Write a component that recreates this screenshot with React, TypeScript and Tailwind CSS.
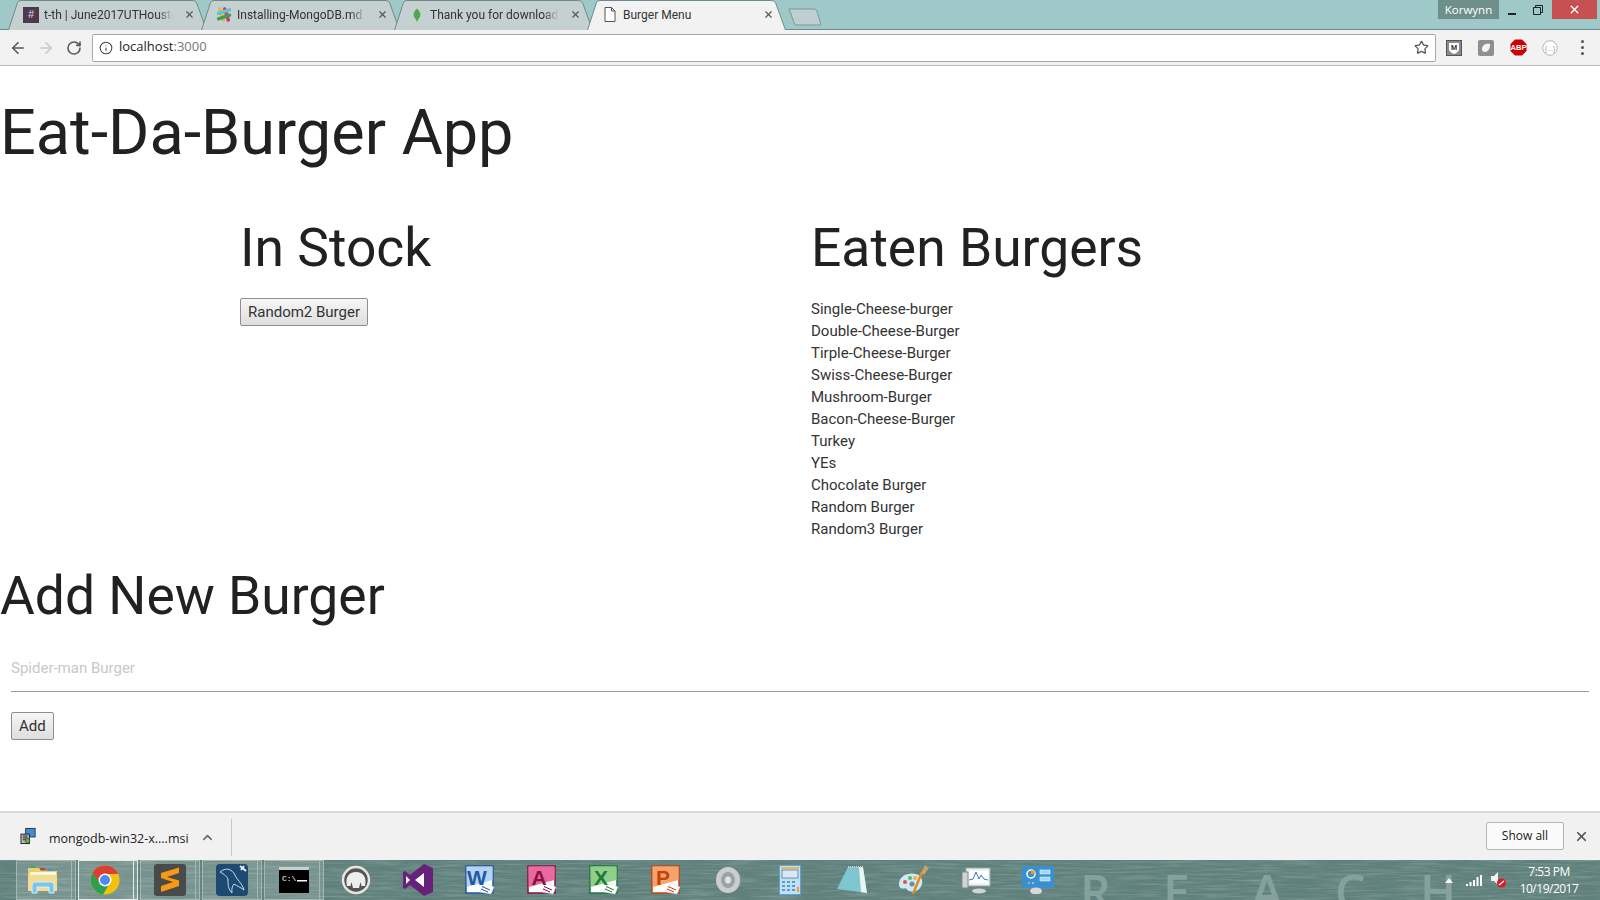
import React from "react";
import { ArrowLeft, ArrowRight, RotateCw, Info, Star, X, ChevronUp } from "lucide-react";

function TabShape({ active }: { active?: boolean }) {
  return (
    <svg className="absolute inset-0" width="199" height="30" viewBox="0 0 199 30">
      <path d="M0.5 30 L9.5 2.5 Q10.5 0.5 13 0.5 L184 0.5 Q187 0.5 188.5 2.5 L198.5 30" fill={active ? "#f2f2f2" : "#c5d0d0"} stroke="#6f8a8a" strokeWidth="1" />
    </svg>
  );
}

function Tab({ icon, label, active, fade }: { icon: React.ReactNode; label: string; active?: boolean; fade?: boolean }) {
  return (
    <div className={`relative h-[30px] w-[199px] -mr-[6px] shrink-0 ${active ? "z-10" : ""}`}>
      <TabShape active={active} />
      <div className="relative flex h-full items-center pb-[1px] pl-[15px]">
        <div className="flex h-4 w-4 shrink-0 items-center justify-center">{icon}</div>
        <div className={`ml-[5px] w-[129px] overflow-hidden whitespace-nowrap font-['Roboto',sans-serif] text-[12px] text-[#333] ${fade ? "[mask-image:linear-gradient(to_right,black_88%,transparent)]" : ""}`}>{label}</div>
        <X size={11} strokeWidth={2.4} className="ml-[11px] shrink-0 text-[#555]" />
      </div>
    </div>
  );
}

const SlackIcon = () => (
  <svg width="17" height="17" viewBox="0 0 16 16">
    <rect x="3.800" y="0.5" width="3.400" height="15" rx="1.700" fill="#e8b93a" transform="rotate(-18 5.5 8)" />
    <rect x="8.800" y="0.5" width="3.400" height="15" rx="1.700" fill="#dc2f6a" transform="rotate(-18 10.5 8)" />
    <rect x="0.5" y="3.400" width="15" height="3.400" rx="1.700" fill="#5cc7cf" transform="rotate(-18 8 5)" />
    <rect x="0.5" y="8.800" width="15" height="3.400" rx="1.700" fill="#3f9d5a" transform="rotate(-18 8 10.5)" />
  </svg>
);

const LeafIcon = () => (
  <svg width="8" height="16" viewBox="0 0 10 16">
    <path d="M5 0 C8 3 10 6 9 9.5 C8.300 12 6 13.500 5.300 16 L4.700 16 C4 13.500 1.700 12 1 9.500 C0 6 2 3 5 0Z" fill="#4fa84a" />
  </svg>
);

const FileIcon = () => (
  <svg width="12" height="15" viewBox="0 0 12 15" fill="#fff" stroke="#555" strokeWidth="1">
    <path d="M1 .5 H7.500 L11 4 V14.500 H1Z M7.500 .5 V4 H11" />
  </svg>
);

const Ext = ({ children }: { children: React.ReactNode }) => (
  <div className="flex h-[24px] w-[32px] items-center justify-center">{children}</div>
);

function TaskBtn({ children, active, framed, nudge }: { children: React.ReactNode; active?: boolean; framed?: boolean; nudge?: boolean }) {
  return (
    <div className="relative flex h-[40px] w-[62px] shrink-0 items-center justify-center">
      {framed && (
        <div className={`absolute inset-y-0 left-[1px] right-[1px] border bg-white/15 ${active ? "border-[#e6eeec]" : "border-[#a3b8b4]"}`}>
          <div className={`absolute inset-y-0 right-[3px] w-px ${active ? "bg-[#e6eeec]" : "bg-[#a3b8b4]"}`} />
        </div>
      )}
      <div className={`relative flex items-center justify-center ${nudge ? "pr-[6px]" : ""}`}>{children}</div>
    </div>
  );
}

const Ms = ({ letter, color, light }: { letter: string; color: string; light: string }) => (
  <svg width="30" height="30" viewBox="0 0 30 30">
    <rect x="1" y="1" width="27" height="27" fill="#fff" stroke={color} strokeWidth="1.500" />
    <path d="M1.500 1.500 H27.500 V15 L2 22Z" fill={light} />
    <path d="M20 18 L29 22 L26 29 L15 27Z" fill="#fff" stroke="#ccc" strokeWidth=".5" />
    <path d="M17 21.500 L25 25 M16 24 L23 27" stroke={color} strokeWidth="1" />
    <text x="12" y="20" fontSize="21" fontWeight="700" textAnchor="middle" fill={color} fontFamily="Liberation Sans">{letter}</text>
  </svg>
);

const Letter = ({ c, left }: { c: string; left: string }) => (
  <div className={`absolute top-[8px] font-['Open_Sans',sans-serif] text-[48px] font-semibold leading-none text-[#84a19e] ${left}`}>{c}</div>
);

export default function App() {
  const eaten = ["Single-Cheese-burger", "Double-Cheese-Burger", "Tirple-Cheese-Burger", "Swiss-Cheese-Burger", "Mushroom-Burger", "Bacon-Cheese-Burger", "Turkey", "YEs", "Chocolate Burger", "Random Burger", "Random3 Burger"];
  return (
    <div className="flex h-[900px] w-[1600px] flex-col overflow-hidden bg-white font-['Roboto',sans-serif] text-[#212121]">
      {/* Tab strip */}
      <div className="relative flex h-[30px] shrink-0 items-start border-b border-[#6f8a8a] bg-[#9fc8c8] pl-[8px] font-['Open_Sans',sans-serif]">
        <Tab fade label="t-th | June2017UTHouston" icon={<div className="flex h-4 w-4 items-center justify-center bg-[#4d394b] text-[11px] text-[#cfc3ce]">#</div>} />
        <Tab fade label="Installing-MongoDB.md | GitHub" icon={<SlackIcon />} />
        <Tab fade label="Thank you for downloading" icon={<LeafIcon />} />
        <Tab active label="Burger Menu" icon={<FileIcon />} />
        <svg width="34" height="18" viewBox="0 0 34 18" className="ml-[8px] mt-[8px] shrink-0">
          <path d="M1 1 H26 Q28 1 29 3 L33 17 H7 L1 1Z" fill="#bfcfcf" stroke="#7d9696" />
        </svg>
        <div className="ml-auto flex items-start">
          <div className="flex h-[19px] w-[61px] items-center justify-center bg-[#6e8f8c] text-[11.500px] text-white">Korwynn</div>
          <div className="flex h-[19px] w-[26px] items-end justify-center pb-[4px]"><div className="h-[2px] w-[8px] bg-[#222]" /></div>
          <div className="flex h-[19px] w-[26px] items-center justify-center">
            <svg width="10" height="10" viewBox="0 0 10 10" fill="none" stroke="#222"><path d="M.5 2.500 H7.500 V9.500 H.5Z M2.500 2.500 V.5 H9.500 V7.500 H7.500" /></svg>
          </div>
          <div className="ml-[1px] mr-[3px] flex h-[19px] w-[45px] items-center justify-center bg-[#c75050]"><X size={13} strokeWidth={2.5} className="text-white" /></div>
        </div>
      </div>
      {/* Toolbar */}
      <div className="flex h-[36px] shrink-0 items-center border-b border-[#b8b8b8] bg-[#f2f2f2]">
        <div className="flex w-[92px] items-center pl-[9px]">
          <ArrowLeft size={18} strokeWidth={2.200} className="text-[#5a5a5a]" />
          <ArrowRight size={18} strokeWidth={2} className="ml-[10px] text-[#c8c8c8]" />
          <RotateCw size={16} strokeWidth={2.400} className="ml-[11px] text-[#5a5a5a]" />
        </div>
        <div className="flex h-[28px] w-[1344px] items-center rounded-[2px] border border-[#a9a9a9] bg-white pl-[6px] pr-[4px]">
          <Info size={14} strokeWidth={1.800} className="text-[#444]" />
          <div className="ml-[6px] pb-[1px] font-['Open_Sans',sans-serif] text-[13px] text-[#222]">localhost<span className="text-[#777]">:3000</span></div>
          <Star size={15} strokeWidth={2} className="ml-auto mr-[2px] text-[#555]" />
        </div>
        <div className="ml-[2px] flex flex-1 items-center">
          <Ext>
            <svg width="16" height="16" viewBox="0 0 16 16"><rect x=".5" y=".5" width="15" height="15" fill="#8a8a8a" stroke="#555" /><path d="M3 3 H13 V9 Q13 12 8 14 Q3 12 3 9Z" fill="#fff" /><text x="8" y="10" fontSize="7" fontWeight="700" textAnchor="middle" fill="#333">M</text></svg>
          </Ext>
          <Ext>
            <svg width="16" height="16" viewBox="0 0 16 16"><rect width="16" height="16" rx="2" fill="#8f8f8f" /><path d="M4 9 C4 5 8 3 12 4 C12.500 8 10 12 7 12 C5 12 4 11 4 9Z" fill="#f4f4f4" /></svg>
          </Ext>
          <Ext>
            <svg width="17" height="17" viewBox="0 0 17 17"><path d="M5 0.500 H12 L16.500 5 V12 L12 16.500 H5 L0.500 12 V5Z" fill="#c00" /><text x="8.500" y="11.300" fontSize="7.500" fontWeight="700" textAnchor="middle" fill="#fff" fontFamily="Liberation Sans">ABP</text></svg>
          </Ext>
          <Ext>
            <svg width="16" height="16" viewBox="0 0 16 16"><circle cx="8" cy="8" r="7.300" fill="#fff" stroke="#b5b5b5" /><text x="8" y="10.500" fontSize="7" textAnchor="middle" fill="#999" fontFamily="Liberation Sans">{"{...}"}</text></svg>
          </Ext>
          <div className="ml-[4px] flex w-[24px] flex-col items-center gap-[3px]">
            <div className="h-[3px] w-[3px] rounded-full bg-[#555]" />
            <div className="h-[3px] w-[3px] rounded-full bg-[#555]" />
            <div className="h-[3px] w-[3px] rounded-full bg-[#555]" />
          </div>
        </div>
      </div>
      {/* Page */}
      <main className="min-h-0 flex-1 overflow-hidden">
        <h1 className="mt-[32px] text-[63px] font-normal leading-[69px]">Eat-Da-Burger App</h1>
        <div className="mt-[51px] flex pl-[240px]">
          <section className="w-[571px]">
            <h2 className="text-[53.400px] font-normal leading-[59px]">In Stock</h2>
            <button className="mt-[21px] block h-[28px] rounded-[2px] border border-[#8f8f8f] bg-gradient-to-b from-[#f6f6f6] to-[#dedede] px-[7px] text-[15px] leading-none text-[#333]">Random2 Burger</button>
          </section>
          <section>
            <h2 className="text-[53.400px] font-normal leading-[59px]">Eaten Burgers</h2>
            <ul className="mt-[21px]">
              {eaten.map((b) => <li key={b} className="text-[15px] leading-[22px] text-[#333]">{b}</li>)}
            </ul>
          </section>
        </div>
        <h2 className="mt-[26px] text-[53.400px] font-normal leading-[59px]">Add New Burger</h2>
        <div className="mx-[11px] mt-[20px] flex h-[47px] items-center border-b border-[#9e9e9e] text-[15px] text-[#c8c8c8]">Spider-man Burger</div>
        <button className="ml-[11px] mt-[20px] block h-[28px] rounded-[2px] border border-[#8f8f8f] bg-gradient-to-b from-[#f6f6f6] to-[#dedede] px-[7px] text-[15px] leading-none text-[#333]">Add</button>
      </main>
      {/* Downloads */}
      <div className="flex h-[49px] shrink-0 items-center border-t-2 border-[#d9d9d9] bg-[#f1f1f1] pb-[1px] font-['Open_Sans',sans-serif]">
        <svg width="17" height="18" viewBox="0 0 18 18" className="ml-[20px]">
          <rect x="6" y="1" width="10" height="9" fill="#3a8fd8" stroke="#333" />
          <rect x="1" y="7" width="9" height="10" fill="#b9b9b9" stroke="#222" />
          <path d="M3 9 H8 M3 11 H8 M3 13 H8" stroke="#222" />
          <circle cx="8" cy="14" r="2.500" fill="#5ab04a" stroke="#222" strokeWidth=".5" />
        </svg>
        <div className="ml-[12px] w-[144px] whitespace-nowrap pt-[6px] text-[12.500px] text-[#222]">mongodb-win32-x....msi</div>
        <ChevronUp size={15} strokeWidth={2.400} className="ml-[7px] mt-[3px] text-[#666]" />
        <div className="ml-[16px] mt-[3px] h-[37px] w-px bg-[#c8c8c8]" />
        <div className="ml-auto flex h-[28px] w-[78px] items-center justify-center rounded-[2px] border border-[#b5b5b5] bg-[#fafafa] text-[12px] text-[#222]">Show all</div>
        <X size={15} strokeWidth={2.800} className="ml-[10px] mr-[11px] text-[#555]" />
      </div>
      {/* Taskbar */}
      <div className="relative flex h-[40px] shrink-0 items-center overflow-hidden bg-[#5f807b] pl-[15px]">
        <svg className="absolute inset-0" width="1600" height="40">
          <filter id="water"><feTurbulence type="fractalNoise" baseFrequency="0.025 0.5" numOctaves="3" seed="4" /><feColorMatrix values="0 0 0 0 0.68  0 0 0 0 0.76  0 0 0 0 0.74  1.400 0 0 0 -0.550" /></filter>
          <rect width="1600" height="40" filter="url(#water)" opacity="0.35" />
        </svg>
        <Letter c="R" left="left-[1080px]" />
        <Letter c="E" left="left-[1163px]" />
        <Letter c="A" left="left-[1251px]" />
        <Letter c="C" left="left-[1335px]" />
        <Letter c="H" left="left-[1420px]" />
        <TaskBtn framed nudge>
          <svg width="32" height="30" viewBox="0 0 32 30"><path d="M1 3 H12 L14 6 H30 V26 H1Z" fill="#e8cf78" /><rect x="3" y="7" width="26" height="3" fill="#fff7d6" /><rect x="4" y="1" width="4" height="2" fill="#49a948" /><rect x="13" y="3" width="5" height="2" fill="#c8412f" /><rect x="21" y="4" width="5" height="2" fill="#3d94d8" /><path d="M1 10 H30 V26 H1Z" fill="#f3dd92" /><path d="M5 28 V20 Q5 17 8 17 H24 Q27 17 27 20 V28 H22 V22 H10 V28Z" fill="#7cc4ea" stroke="#d5efff" /></svg>
        </TaskBtn>
        <TaskBtn framed active nudge>
          <svg width="30" height="30" viewBox="0 0 30 30"><circle cx="15" cy="15" r="14.500" fill="#f4c20d" /><path d="M15 .5 A14.500 14.500 0 0 0 2.500 7.700 L9 18.500 L15 9 H28.300 A14.500 14.500 0 0 0 15 .5Z" fill="#db3e32" /><path d="M2.500 7.700 A14.500 14.500 0 0 0 13 29.400 L19 19.500 L10.500 19 Z" fill="#2f9e4f" /><circle cx="15" cy="15" r="6.500" fill="#fff" /><circle cx="15" cy="15" r="5" fill="#4c8bf5" /></svg>
        </TaskBtn>
        <TaskBtn framed>
          <svg width="32" height="32" viewBox="0 0 32 32"><rect width="32" height="32" rx="3" fill="#4a4a4a" /><path d="M7 12 L25 6.500 V12 L13 16 L25 19.500 V25 L7 31 V25 L19 21 L7 17Z" transform="translate(0 -3)" fill="#f59a12" /></svg>
        </TaskBtn>
        <TaskBtn framed>
          <svg width="32" height="32" viewBox="0 0 32 32"><rect width="32" height="32" rx="4" fill="#1c4a72" /><path d="M4 8 C10 3 16 5 19 11 C21 16 26 19 28 26 C24 23 21 22 18 20 C15 24 16 27 16 29 C12 25 12 20 12 16 C12 13 8 10 4 8Z" fill="none" stroke="#cfe0ec" strokeWidth="1" /><path d="M24 2 L30 7 M28 2 L25 6" stroke="#e6f0f7" strokeWidth="2" /></svg>
        </TaskBtn>
        <TaskBtn framed>
          <svg width="30" height="26" viewBox="0 0 30 26"><rect width="30" height="26" fill="#000" /><rect width="30" height="3" fill="#c7d0d0" /><text x="3" y="14" fontSize="8" fill="#fff" fontFamily="Liberation Mono">C:\</text><rect x="18" y="13" width="10" height="1.500" fill="#fff" /></svg>
        </TaskBtn>
        <TaskBtn>
          <svg width="30" height="30" viewBox="0 0 30 30"><circle cx="15" cy="15" r="13" fill="#555" stroke="#e6e6e6" strokeWidth="2.500" /><path d="M6 21 C4 12 8 7 15 7 C22 7 26 12 24 21 L20.500 21 L19.500 17 L18 23 L12 23 L10.500 17 L9.500 21Z" fill="#eee" /></svg>
        </TaskBtn>
        <TaskBtn>
          <svg width="30" height="32" viewBox="0 0 30 32"><path d="M21 0 L30 4 V28 L21 32 L7 21 L2 25 L0 24 V8 L2 7 L7 11Z" fill="#68217a" /><path d="M21 9 V23 L12 16Z M3 12 L7 16 L3 20Z" fill="#fff" /></svg>
        </TaskBtn>
        <TaskBtn><Ms letter="W" color="#1f5aa8" light="#b7d3f0" /></TaskBtn>
        <TaskBtn><Ms letter="A" color="#8a1040" light="#e86aa0" /></TaskBtn>
        <TaskBtn><Ms letter="X" color="#1f7a36" light="#8fcf8a" /></TaskBtn>
        <TaskBtn><Ms letter="P" color="#c8400f" light="#f4a46a" /></TaskBtn>
        <TaskBtn>
          <svg width="30" height="30" viewBox="0 0 30 30"><path d="M16 2 C22 3 29 8 29 15 C29 22 22 27 16 28Z" fill="#7f8888" /><ellipse cx="15" cy="15" rx="12" ry="13" fill="#c9cfcf" /><ellipse cx="15" cy="15" rx="7" ry="8" fill="#9ba4a4" /><ellipse cx="15" cy="15" rx="3" ry="3.500" fill="#e2e5e5" /></svg>
        </TaskBtn>
        <TaskBtn>
          <svg width="22" height="30" viewBox="0 0 22 30"><rect x=".5" y=".5" width="21" height="29" fill="#bfe0f5" stroke="#5aa2d8" /><rect x="2" y="2" width="18" height="2" fill="#f0b450" /><rect x="3" y="5" width="16" height="8" fill="#d8e8f4" stroke="#6d90ad" /><g fill="#5a9bd0"><rect x="3" y="16" width="3" height="2" /><rect x="8" y="16" width="3" height="2" /><rect x="13" y="16" width="3" height="2" /><rect x="3" y="20" width="3" height="2" /><rect x="8" y="20" width="3" height="2" /><rect x="13" y="20" width="3" height="2" /><rect x="3" y="24" width="3" height="2" /><rect x="8" y="24" width="3" height="2" /><rect x="13" y="24" width="3" height="2" /></g><rect x="18" y="22" width="2" height="5" fill="#f0a030" /></svg>
        </TaskBtn>
        <TaskBtn>
          <svg width="32" height="30" viewBox="0 0 32 30"><path d="M12 2 H27 L31 28 L1 24Z" fill="#7fc6d2" /><path d="M27 2 L31 28 L25 27 L23 2Z" fill="#e9f4f4" /><path d="M12 2 H27" stroke="#ccc" strokeWidth="2" strokeDasharray="1 1" /></svg>
        </TaskBtn>
        <TaskBtn>
          <svg width="32" height="32" viewBox="0 0 32 32"><path d="M1 20 C1 12 10 8 18 10 C26 12 26 22 20 26 C14 30 8 26 8 24 C5 25 1 25 1 20Z" fill="#cfe8f5" /><circle cx="7" cy="18" r="2" fill="#d9534f" /><circle cx="12" cy="14" r="2" fill="#5cb85c" /><circle cx="17" cy="14" r="2" fill="#f0ad4e" /><circle cx="14" cy="20" r="2.500" fill="#6d8d9a" /><path d="M15 30 L24 8" stroke="#e28c1e" strokeWidth="2.500" /><path d="M23 9 L27 1 L31 4 L26 11Z" fill="#c8a06a" /></svg>
        </TaskBtn>
        <TaskBtn>
          <svg width="30" height="28" viewBox="0 0 30 28"><rect x="5" y="2" width="24" height="18" fill="#eef2f2" stroke="#9ba4a4" /><rect x="8" y="5" width="19" height="12" fill="#fff" /><path d="M8 14 L12 13 L15 6 L18 13 L20 9 L23 13 L27 14" fill="none" stroke="#2f78c4" /><rect x="1" y="6" width="6" height="16" fill="#cfd5d5" stroke="#7f8888" /><ellipse cx="18" cy="25" rx="7" ry="2.500" fill="#cfd5d5" /></svg>
        </TaskBtn>
        <TaskBtn>
          <svg width="32" height="28" viewBox="0 0 32 28"><rect width="32" height="22" rx="1" fill="#3a8fd0" /><circle cx="9" cy="8" r="4" fill="none" stroke="#fff" strokeWidth="1.500" /><path d="M9 4 A4 4 0 0 1 13 8 H9Z" fill="#f59a12" /><rect x="18" y="4" width="10" height="4" fill="#9fd6f5" stroke="#fff" strokeWidth=".5" /><rect x="18" y="11" width="10" height="4" fill="#9fd6f5" stroke="#fff" strokeWidth=".5" /><circle cx="7" cy="17" r="1" fill="#f0b450" /><circle cx="11" cy="17" r="1" fill="#9fd6f5" /><ellipse cx="14" cy="25" rx="6" ry="3.500" fill="#d9d9d9" /></svg>
        </TaskBtn>
        <div className="relative ml-auto flex items-center pr-[19px] font-['Open_Sans',sans-serif] text-white">
          <svg width="8" height="5" viewBox="0 0 8 5" className="mr-[13px]"><path d="M4 0 L8 5 H0Z" fill="#f2f2f2" /></svg>
          <svg width="16" height="11" viewBox="0 0 16 11" className="mr-[9px]" fill="#fff"><rect x="0" y="9" width="2" height="2" /><rect x="3.500" y="7" width="2" height="4" /><rect x="7" y="5" width="2" height="6" /><rect x="10.500" y="2" width="2" height="9" /><rect x="14" y="0" width="2" height="11" /></svg>
          <svg width="16" height="16" viewBox="0 0 16 16" className="mr-[10px]"><path d="M0 4 H3 L7 0 V13 L3 9 H0Z" fill="#f2f2f2" /><circle cx="10.500" cy="11" r="4.500" fill="#e0162b" /><path d="M8 13 L13 9" stroke="#fff" strokeWidth="1.500" /></svg>
          <div className="w-[64px] text-center text-[12px] leading-[17px] tracking-[-0.5px]"><div>7:53 PM</div><div>10/19/2017</div></div>
        </div>
      </div>
    </div>
  );
}
